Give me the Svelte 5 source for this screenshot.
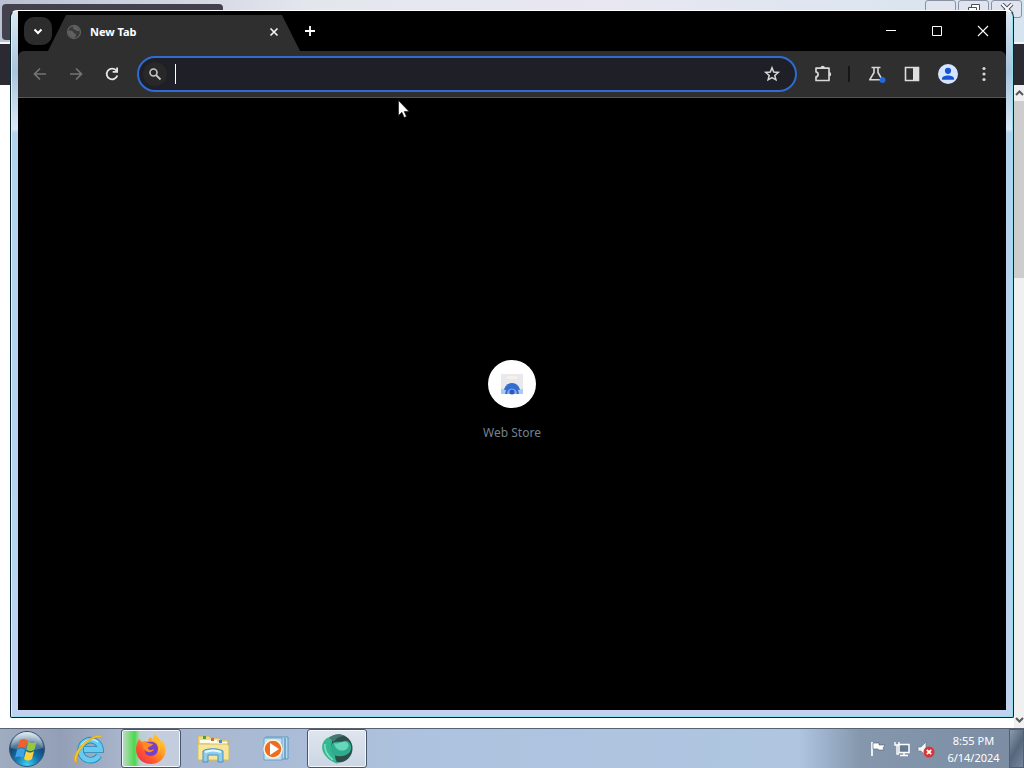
<script>
  let query = $state('');
</script>

<main class="desktop">
  <div class="workspace">
    <section class="back-window" aria-label="Background window">
      <div class="back-titlebar">
        <div class="back-tab"></div>
        <div class="back-controls">
          <button aria-label="Minimize background window"></button>
          <button aria-label="Restore background window">
            <svg width="14" height="12" viewBox="0 0 14 12" fill="#fff" stroke="#4a5060"><path d="M4.500 1.500h8v6h-8z" /><path d="M1.500 4.500h8v6h-8z" /></svg>
          </button>
          <button aria-label="Close background window">
            <svg width="14" height="12" viewBox="0 0 14 12" fill="none"><path d="M2 1l10 10M12 1L2 11" stroke="#4a5060" stroke-width="4" /><path d="M2 1l10 10M12 1L2 11" stroke="#fff" stroke-width="2" /></svg>
          </button>
        </div>
      </div>
      <div class="back-toolbar"></div>
      <div class="back-page">
        <div class="scrollbar">
          <svg width="9" height="6" viewBox="0 0 9 6"><path d="M1 5l3.500-3.500L8 5" fill="none" stroke="#55595c" stroke-width="2" /></svg>
          <div class="thumb"></div>
          <svg width="9" height="6" viewBox="0 0 9 6"><path d="M1 1l3.500 3.500L8 1" fill="none" stroke="#55595c" stroke-width="2" /></svg>
        </div>
      </div>
    </section>

    <section class="browser" aria-label="Browser">
      <header class="tabstrip">
        <button class="tab-search" aria-label="Search tabs">
          <svg width="12" height="12" viewBox="0 0 12 12"><path d="M2.500 4.500L6 8l3.500-3.500" fill="none" stroke="#fff" stroke-width="2" /></svg>
        </button>
        <div class="tab">
          <svg width="16" height="16" viewBox="0 0 16 16"><circle cx="8" cy="8" r="6.500" fill="#3a3a3a" stroke="#5e5e5e" stroke-width="1.300" /><path d="M2 7c3-1 5 0 5.500 1.500S10 9 10 11s-1.500 1.500-2 3C4.500 14 2 11 2 7zM7.500 2c-1 2-.500 3 1 3.500s2 2 5 1.800C13.500 4 11 2 7.500 2z" fill="#606060" /></svg>
          <span>New Tab</span>
          <button aria-label="Close tab">
            <svg width="10" height="10" viewBox="0 0 10 10"><path d="M1.500 1.500l7 7M8.500 1.500l-7 7" stroke="#f2f2f2" stroke-width="1.700" /></svg>
          </button>
        </div>
        <button class="new-tab" aria-label="New tab">
          <svg width="12" height="12" viewBox="0 0 12 12"><path d="M6 1v10M1 6h10" stroke="#fff" stroke-width="1.800" /></svg>
        </button>
        <div class="window-controls">
          <button aria-label="Minimize"><svg width="12" height="12" viewBox="0 0 12 12"><path d="M1 5.500h10" stroke="#fff" /></svg></button>
          <button aria-label="Maximize"><svg width="12" height="12" viewBox="0 0 12 12"><path d="M1.500 1.500h9v9h-9z" fill="none" stroke="#fff" /></svg></button>
          <button aria-label="Close"><svg width="12" height="12" viewBox="0 0 12 12"><path d="M1 1l10 10M11 1L1 11" stroke="#fff" stroke-width="1.100" /></svg></button>
        </div>
      </header>

      <div class="toolbar">
        <button class="tool" aria-label="Back"><svg width="16" height="16" viewBox="0 0 16 16"><path d="M14 8H3M8 2.500L2.500 8 8 13.500" fill="none" stroke="#747474" stroke-width="1.700" /></svg></button>
        <button class="tool" aria-label="Forward"><svg width="16" height="16" viewBox="0 0 16 16"><path d="M2 8h11M8 2.500L13.500 8 8 13.500" fill="none" stroke="#747474" stroke-width="1.700" /></svg></button>
        <button class="tool" aria-label="Reload"><svg width="16" height="16" viewBox="0 0 16 16"><path d="M13.300 9.500A5.400 5.400 0 1 1 12 4.200l1 1.200" fill="none" stroke="#e6e6e6" stroke-width="1.800" /><path d="M14 1.500v5.300H8.700V5h3.500V1.500z" fill="#e6e6e6" /></svg></button>
        <div class="omnibox">
          <label for="address" aria-label="Search or type a URL"><svg width="14" height="14" viewBox="0 0 14 14"><circle cx="5.500" cy="5.500" r="3.500" fill="none" stroke="#c7c7c7" stroke-width="1.600" /><path d="M8 8l4.500 4.500" stroke="#c7c7c7" stroke-width="1.800" /></svg></label>
          <span class="caret"></span>
          <input id="address" type="text" bind:value={query} />
          <button aria-label="Bookmark this tab"><svg width="18" height="18" viewBox="0 0 18 18"><path d="M9 2.800l1.700 4.200 4.600.400-3.500 3 1.100 4.400L9 12.500l-3.900 2.300 1.100-4.400-3.500-3 4.600-.4z" fill="none" stroke="#d6d6d6" stroke-width="1.500" /></svg></button>
        </div>
        <button class="tool" aria-label="Extensions"><svg width="20" height="20" viewBox="0 0 20 20"><path d="M3 4.200h13v12.300H3v-3.600c2.800-.6 2.800-4.400 0-5z" fill="none" stroke="#d8d8d8" stroke-width="1.700" stroke-linejoin="round" /><path d="M7.500 4a2.200 2.200 0 0 1 4.400 0zM16 8a2.200 2.200 0 0 1 0 4.400z" fill="#d8d8d8" /></svg></button>
        <span class="divider"></span>
        <button class="tool" aria-label="Experiments"><svg width="20" height="20" viewBox="0 0 20 20"><path d="M5.500 3.500h9M8 3.500v5l-4.300 7.300h12.600L12 8.500v-5" fill="none" stroke="#d8d8d8" stroke-width="1.600" stroke-linejoin="round" /><circle cx="16.500" cy="16" r="3" fill="#2468dc" /></svg></button>
        <button class="tool" aria-label="Side panel"><svg width="16" height="16" viewBox="0 0 16 16"><path d="M1.500 1.500h13v13h-13z" fill="none" stroke="#dedede" stroke-width="1.600" /><path d="M9 1h6v14H9z" fill="#dedede" /></svg></button>
        <button class="tool" aria-label="Profile"><svg width="20" height="20" viewBox="0 0 20 20"><circle cx="10" cy="10" r="10" fill="#d6e5ff" /><circle cx="10" cy="6.800" r="3.100" fill="#1557d2" /><path d="M4 15.800v-1.300c0-4 12-4 12 0v1.300z" fill="#1557d2" /></svg></button>
        <button class="tool" aria-label="Menu"><svg width="4" height="16" viewBox="0 0 4 16" fill="#d6d6d6"><circle cx="2" cy="2.500" r="1.600" /><circle cx="2" cy="8" r="1.600" /><circle cx="2" cy="13.500" r="1.600" /></svg></button>
      </div>

      <div class="page">
        <a class="shortcut" href="#web-store">
          <span class="disc">
            <svg width="24" height="24" viewBox="0 0 24 24"><path d="M1 2h22v20H1z" fill="#e9e9ed" /><path d="M7 4h10v3H7z" fill="#f8efe8" /><path d="M3 22a9 11 0 0 1 18 0z" fill="#346cd0" /><path d="M1 17l5 1-1 4H1zM23 17l-5 1 1 4h4z" fill="#a9c8fa" /><path d="M7 22a5 5.500 0 0 1 10 0z" fill="#82aaf0" /><circle cx="12" cy="20" r="2.500" fill="#285bc0" /></svg>
          </span>
          <span>Web Store</span>
        </a>
      </div>
    </section>

    <svg class="pointer" width="12" height="19" viewBox="0 0 12 19"><path d="M.500.500v15l3.400-3.200 2.300 5.300 2.300-1-2.300-5.100H11z" fill="#fff" stroke="#111" stroke-width=".6" /></svg>
  </div>

  <footer class="taskbar">
    <button class="start" aria-label="Start">
      <svg width="38" height="38" viewBox="0 0 38 38">
        <defs>
          <radialGradient id="orb" cx=".5" cy=".95" r=".9"><stop offset="0" stop-color="#39d2f5" /><stop offset=".4" stop-color="#1471ab" /><stop offset=".7" stop-color="#174672" /><stop offset="1" stop-color="#9bb9cd" /></radialGradient>
          <linearGradient id="gloss" x2="0" y2="1"><stop stop-color="#fff" stop-opacity=".65" /><stop offset="1" stop-color="#fff" stop-opacity=".15" /></linearGradient>
        </defs>
        <circle cx="19" cy="19" r="17.500" fill="url(#orb)" stroke="#345573" />
        <path d="M3 18a16 16 0 0 1 32 0c-9 3-23 3-32 0z" fill="url(#gloss)" />
        <path d="M11.500 10.500c3-2 5-2 8 0l-2 8c-3-2-5-2-8 0z" fill="#ed612c" /><path d="M20.500 11.500c3 2 5 2 8 0l-2 8c-3 2-5 2-8 0z" fill="#96c83d" /><path d="M9 20c3-2 5-2 8 0l-2 8c-3-2-5-2-8 0z" fill="#3ba4e7" /><path d="M18 21c3 2 5 2 8 0l-2 8c-3 2-5 2-8 0z" fill="#ffd23c" />
      </svg>
    </button>
    <nav class="apps" aria-label="Taskbar">
      <button aria-label="Internet Explorer">
        <svg width="34" height="34" viewBox="0 0 34 34"><path d="M27 23.500a10 10 0 1 1 1.500-6H12" fill="none" stroke="#238bbd" stroke-width="6.500" /><path d="M27 23.500a10 10 0 1 1 1.500-6H12" fill="none" stroke="#67cbf0" stroke-width="4.800" /><path d="M9 14c3-6 12-9 17-4" fill="none" stroke="#c1effc" stroke-width="1.500" /><path d="M5 31C-2 29 5 15 16 8 23 3 30 1 30 6c-3-2-9 0-14 4C8 16 3 26 5 31z" fill="#f8c72e" stroke="#d69b13" stroke-width=".6" /></svg>
      </button>
      <button class="running firefox" aria-label="Firefox">
        <svg width="32" height="32" viewBox="0 0 32 32">
          <defs><linearGradient id="fox" x1="1" x2="0" y2="1"><stop stop-color="#ffe83f" /><stop offset=".4" stop-color="#ff9924" /><stop offset=".7" stop-color="#ff512e" /><stop offset="1" stop-color="#e72164" /></linearGradient></defs>
          <path d="M4 6l3 3c2-1 4-1 6-1 0-2 1-3 3-4l2 3 1-6c4 2 6 5 7 8l1-2c8 10 2 24-11 24C3 31-3 18 4 6z" fill="url(#fox)" />
          <path d="M11 10c5-3 12-1 12 6 0 4-3 7-7 7-5 0-7-3-6-7z" fill="#7541cf" />
          <path d="M7 10c3-2 6 0 11 1-1 3-5 2-5 4s3 3 6 1c-1 4-7 4-9 1-2-2-2-4-3-7z" fill="#ff8b24" />
          <path d="M15 8c8-2 11 4 8 12 5-6 2-12-3-14z" fill="#ffc12f" />
        </svg>
      </button>
      <button aria-label="File Explorer">
        <svg width="34" height="32" viewBox="0 0 34 32"><path d="M2 3h11l2 2h8l2 2h7v20H2z" fill="#f1dc86" stroke="#cfb45c" /><path d="M4 7h17v3H4zM14 9h17v3H14z" fill="#fffdf0" /><path d="M2 11h29l2 2v14H2z" fill="#f7e599" stroke="#d4bd68" /><path d="M7 3h3v3H7z" fill="#42a342" /><path d="M15 5h3v3h-3z" fill="#ce6b3b" /><path d="M23 7h3v3h-3z" fill="#4888cc" /><path d="M7 29V18c4-3 15-3 20 0v11h-5v-7H12v7z" fill="#8dccec" stroke="#4a91bd" /><path d="M9 19c5-2 11-2 16 0" stroke="#e5faff" stroke-width="2" fill="none" /></svg>
      </button>
      <button aria-label="Media Player">
        <svg width="30" height="30" viewBox="0 0 30 30"><path d="M6 3h22v22H6z" fill="#b4daf0" stroke="#5d98c0" /><path d="M4 4h18v22H4z" fill="#c3e3f4" stroke="#6ba2c3" /><path d="M25 4v21" stroke="#3275a4" /><circle cx="13" cy="15" r="9" fill="#ed6d20" stroke="#fff2dd" stroke-width="1.500" /><path d="M10 9v12l9-6z" fill="#fff" /></svg>
      </button>
      <button class="running" aria-label="Browser">
        <svg width="34" height="34" viewBox="0 0 34 34"><circle cx="18.500" cy="16.500" r="14" fill="#2d4f4c" /><path d="M4 9C-1 17 4 27 18 32c-2-3-3-6-3-9-5-4-5-12 0-19C10 4 6 6 4 9z" fill="#35b792" /><path d="M9 6c4-4 11-5 16-2-5 0-9 2-11 6z" fill="#45786f" /><path d="M12 12c3-4 8-1 12-3 6-2 10 7 5 12-4 4-15 5-18-1-1-3 0-6 1-8z" fill="#2fac8e" /><path d="M14 11c4 2 7-2 12-1 4 2 3 6-1 8-5 2-10-1-11-7z" fill="#68d7b9" /><path d="M5 12c-1 6 3 12 8 16" fill="none" stroke="#82e1c5" stroke-width="1.500" /></svg>
      </button>
    </nav>
    <div class="tray">
      <button aria-label="Action center"><svg width="18" height="18" viewBox="0 0 18 18"><path d="M3 2v14" stroke="#fff" stroke-width="1.700" /><path d="M4 3h6v2h6l-2 3 1 2H9V9H4z" fill="#fff" stroke="#4e5e72" stroke-width=".6" /></svg></button>
      <button aria-label="Network"><svg width="18" height="18" viewBox="0 0 18 18"><path d="M6 4.500h10v8H6z" fill="#667b93" stroke="#fff" stroke-width="1.500" /><path d="M11 13v2M7 15.500h8" stroke="#fff" stroke-width="1.500" /><path d="M2 2v3h4V2M4 5v9h2" fill="none" stroke="#fff" stroke-width="1.400" /></svg></button>
      <button aria-label="Volume"><svg width="18" height="18" viewBox="0 0 18 18"><path d="M1 7h3l5-5v14l-5-5H1z" fill="#f4f6f8" stroke="#66778a" stroke-width=".6" /><circle cx="12" cy="12" r="5.500" fill="#d83636" /><path d="M9.800 9.800l4.400 4.400M14.200 9.800l-4.400 4.400" stroke="#fff" stroke-width="1.700" /></svg></button>
      <time datetime="2024-06-14T20:55"><span>8:55 PM</span><span>6/14/2024</span></time>
    </div>
    <button class="show-desktop" aria-label="Show desktop"></button>
  </footer>
</main>

<style>
  :global(body) { margin: 0; }
  * { box-sizing: border-box; }
  button { display: flex; align-items: center; justify-content: center; padding: 0; border: 0; background: none; flex: none; }
  svg { display: block; flex: none; }
  .desktop { display: flex; flex-direction: column; height: 100vh; min-height: 400px; overflow: hidden; background: #fff; font: 12px/16px "Noto Sans", sans-serif; }
  .workspace { position: relative; flex: 1; min-height: 0; display: flex; }
  .back-window { flex: 1; display: flex; flex-direction: column; }
  .back-titlebar { height: 44px; display: flex; justify-content: space-between; align-items: flex-start; padding: 0 2px; background: linear-gradient(90deg, #b9c1d2, #e4e6ee 30%, #e8e7f2 60%, #d5e4ef); border-bottom: 2px solid #f4f5fa; }
  .back-tab { width: 221px; height: 36px; margin-top: 4px; border-radius: 4px; background: #42414d; }
  .back-controls { display: flex; gap: 2px; }
  .back-controls button { width: 31px; height: 18px; border: 1px solid #8991a3; border-radius: 3px; background: #dfe4ee; }
  .back-toolbar { height: 41px; background: #2b2a33; }
  .back-page { flex: 1; display: flex; justify-content: flex-end; min-height: 0; }
  .scrollbar { width: 10px; display: flex; flex-direction: column; align-items: center; padding: 5px 0; background: #f0f0f0; }
  .thumb { width: 100%; height: 28%; margin: 5px 0 auto; background: #cdcdcd; }

  .browser { position: absolute; inset: 10px; display: flex; flex-direction: column; padding: 0 7px 7px; border: 1px solid #06262e; border-top-color: #fff; border-radius: 7px 7px 2px 2px; background: linear-gradient(#dce8f3, #a9c5df 60px, #d9e8f6 118px, #b4d3ee 122px, #b8d5f0 80%, #c2d1ef); box-shadow: inset 1px 0 #d9f4fb, inset -1px -1px #8de0ec; }
  .tabstrip { display: flex; height: 40px; align-items: center; padding: 0 0 0 6px; background: #000; }
  .tab-search { width: 28px; height: 28px; border-radius: 10px; background: #2c2c2c; }
  .tab { align-self: flex-end; display: flex; align-items: center; gap: 8px; width: 252px; height: 36px; margin-left: -4px; padding: 0 20px 2px 18px; background: #2f2f2f; clip-path: polygon(18px 0, 234px 0, 100% 100%, 0 100%); color: #fff; font-weight: 700; font-size: 11px; }
  .tab span { flex: 1; }
  .tab button { width: 12px; height: 20px; }
  .new-tab { width: 20px; height: 28px; }
  .window-controls { display: flex; margin-left: auto; }
  .window-controls button { width: 46px; height: 38px; }
  .toolbar { display: flex; align-items: center; height: 47px; padding: 0 4px; border-bottom: 1px solid #555; border-radius: 6px 6px 0 0; background: #2f2f2f; box-shadow: 0 -6px #000; }
  .tabstrip { position: relative; }
  .tool { width: 36px; height: 36px; }
  .omnibox { flex: 1; display: flex; align-items: center; min-width: 0; height: 36px; margin: 0 8px 0 7px; padding: 0 14px 0 4px; border: 2px solid #2f6bd0; border-radius: 18px; background: #1f1f27; }
  .omnibox label { display: flex; align-items: center; justify-content: center; width: 24px; height: 24px; border-radius: 50%; background: #282828; }
  .omnibox input { flex: 1; min-width: 0; height: 28px; padding: 0 4px; border: 0; outline: 0; background: transparent; color: #fff; font: inherit; }
  .caret { width: 1px; height: 20px; margin-left: 8px; background: #fff; }
  .divider { width: 2px; height: 16px; margin: 0 8px 0 7px; background: #161616; }
  .page { flex: 1; display: flex; align-items: center; justify-content: center; min-height: 0; background: #000; }
  .shortcut { display: flex; flex-direction: column; align-items: center; gap: 17px; padding-bottom: 8px; color: #73838c; text-decoration: none; }
  .disc { display: flex; align-items: center; justify-content: center; width: 48px; height: 48px; border-radius: 50%; background: #fff; }
  .pointer { position: absolute; left: 398px; top: 100px; }

  .taskbar { display: flex; height: 40px; flex: none; align-items: center; border-top: 1px solid #596273; background: linear-gradient(90deg, #a0acc0, #929fb6 6%, #a8b5cb 12%, #a9bad4 25%, #adc2de 40%, #afc6e1 78%, #8497ad 84%, #7c8da3); }
  .start { width: 54px; height: 38px; }
  .apps { display: flex; gap: 2px; margin-left: 5px; }
  .apps button { width: 60px; height: 39px; border-radius: 3px; }
  .apps .running { border: 1px solid #46566b; background: linear-gradient(#e0e5ee, #cbd6e4); box-shadow: inset 0 0 0 1px #f3f6fb; }
  .apps .firefox { background: linear-gradient(90deg, #c2dcc4, #8edb91 10%, #4bd94b 22%, #b8cfc5 30%, #c3cddd 45%, #c3cddd); }
  .tray { display: flex; align-items: center; margin-left: auto; color: #fff; }
  .tray button { width: 24px; height: 32px; }
  time { display: flex; flex-direction: column; align-items: center; width: 71px; font-size: 11px; line-height: 17px; }
  .show-desktop { width: 15px; height: 39px; border: 1px solid #51606f; background: linear-gradient(120deg, #8d9aac, #56677c 50%, #77879b); }
</style>
